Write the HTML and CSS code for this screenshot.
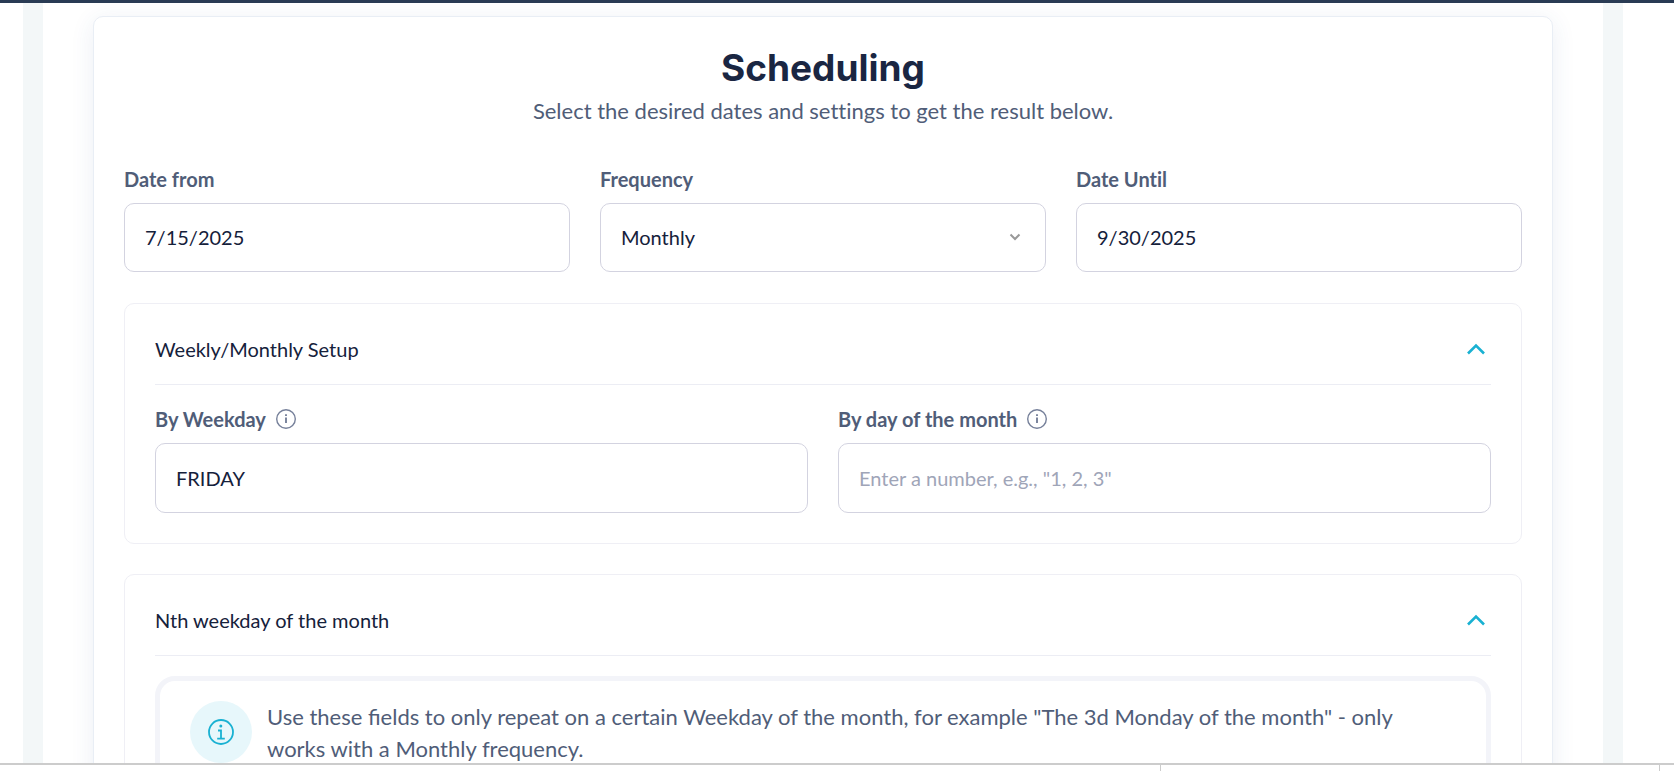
FILE: index.html
```html
<!DOCTYPE html>
<html lang="en">
<head>
<meta charset="utf-8">
<title>Scheduling</title>
<link rel="stylesheet" href="styles.css">
</head>
<body>
<header class="topbar"></header>
<main class="viewport">
  <div class="frame">
    <form class="card">
      <div class="intro">
        <h1 class="title">Scheduling</h1>
        <p class="subtitle">Select the desired dates and settings to get the result below.</p>
      </div>
      <div class="fields fields-three">
        <div class="field">
          <label class="label" for="from">Date from</label>
          <input class="control" id="from" type="text" value="7/15/2025">
        </div>
        <div class="field">
          <label class="label" for="frequency">Frequency</label>
          <div class="select-wrap">
            <select class="control" id="frequency"><option>Monthly</option></select>
            <svg class="select-arrow" viewBox="0 0 12 8" aria-hidden="true"><path d="M1.500 1.500 6 6l4.500-4.500"/></svg>
          </div>
        </div>
        <div class="field">
          <label class="label" for="until">Date Until</label>
          <input class="control" id="until" type="text" value="9/30/2025">
        </div>
      </div>
      <section class="panel">
        <button class="panel-head" type="button" aria-expanded="true">
          <span>Weekly/Monthly Setup</span>
          <svg class="panel-arrow" viewBox="0 0 20 12" aria-hidden="true"><path d="M2 10.500 10 2.500l8 8"/></svg>
        </button>
        <div class="fields fields-two">
          <div class="field">
            <div class="label-row">
              <label class="label" for="weekday">By Weekday</label>
              <svg class="hint" viewBox="0 0 20 20" aria-hidden="true"><circle cx="10" cy="10" r="9.300"/><path class="hint-mark" d="M10 8.500v5.500M10 5.200v1.900"/></svg>
            </div>
            <input class="control" id="weekday" type="text" value="FRIDAY">
          </div>
          <div class="field">
            <div class="label-row">
              <label class="label" for="monthday">By day of the month</label>
              <svg class="hint" viewBox="0 0 20 20" aria-hidden="true"><circle cx="10" cy="10" r="9.300"/><path class="hint-mark" d="M10 8.500v5.500M10 5.200v1.900"/></svg>
            </div>
            <input class="control" id="monthday" type="text" placeholder='Enter a number, e.g., "1, 2, 3"'>
          </div>
        </div>
      </section>
      <section class="panel">
        <button class="panel-head" type="button" aria-expanded="true">
          <span>Nth weekday of the month</span>
          <svg class="panel-arrow" viewBox="0 0 20 12" aria-hidden="true"><path d="M2 10.500 10 2.500l8 8"/></svg>
        </button>
        <div class="note">
          <span class="note-badge">
            <svg class="note-icon" viewBox="0 0 26 26" aria-hidden="true"><circle cx="13" cy="13" r="12"/><path d="M10 11.500h3v8M9.200 19.700h7.600"/><circle class="note-dot" cx="12.800" cy="7" r="1.500"/></svg>
          </span>
          <p class="note-text">Use these fields to only repeat on a certain Weekday of the month, for example "The 3d Monday of the month" - only works with a Monthly frequency.</p>
        </div>
      </section>
    </form>
  </div>
</main>
<footer class="statusbar"><span class="status-cell"></span><span class="status-end"></span></footer>
</body>
</html>
```
FILE: styles.css
```css
* { box-sizing: border-box; }

body {
  margin: 0;
  height: 100vh;
  display: flex;
  flex-direction: column;
  overflow: hidden;
  background: #fff;
  color: #15213b;
  font-family: Lato, "Liberation Sans", sans-serif;
  font-size: 20px;
}

.topbar { flex: none; height: 3px; background: #293b54; }

.viewport {
  flex: 1;
  min-height: 0;
  overflow: hidden;
  padding: 0 51px 0 23px;
}

.frame {
  border: solid #f3f7f8;
  border-width: 0 20px;
  padding: 13px 50px 30px;
}

.card {
  display: flex;
  flex-direction: column;
  gap: 30px;
  padding: 30px;
  border: 1px solid #e9eef5;
  border-radius: 10px;
  background: #fff;
  box-shadow: 0 4px 24px rgba(40, 80, 140, 0.09);
}

.intro { padding-bottom: 8px; text-align: center; }

.title {
  margin: 0;
  font: 700 37px/42px Inter, "Liberation Sans", sans-serif;
  color: #1a2642;
}

.subtitle {
  margin: 6px 0 0;
  font-size: 22px;
  line-height: 32px;
  color: #505d78;
  font-variant-ligatures: none;
}

.fields { display: grid; gap: 30px; }
.fields-three { grid-template-columns: repeat(3, 1fr); padding-bottom: 1px; }
.fields-two { grid-template-columns: repeat(2, 1fr); padding-top: 20px; }

.field { display: flex; flex-direction: column; gap: 10px; min-width: 0; }
.label-row { display: flex; align-items: center; gap: 10px; }
.label { font-weight: 700; line-height: 28px; color: #505d78; font-variant-ligatures: none; }

.hint { width: 20px; height: 20px; fill: none; stroke: #76809a; stroke-width: 1.4; }
.hint-mark { stroke-width: 1.9; }

.control {
  width: 100%;
  height: 70px;
  padding: 0 20px;
  border: 1px solid #d3d3e0;
  border-radius: 10px;
  background: #fff;
  color: inherit;
  font: inherit;
  appearance: none;
}

.fields-three .control { display: block; height: 69px; padding-bottom: 1px; }

.control::placeholder { color: #9fa5b8; opacity: 1; }

.select-wrap { position: relative; }
.select-arrow {
  position: absolute;
  top: 30px;
  right: 25px;
  width: 12px;
  height: 8px;
  fill: none;
  stroke: #999;
  stroke-width: 2;
  pointer-events: none;
}

.panel { padding: 30px; border: 1px solid #efeff5; border-radius: 10px; }

.panel-head {
  display: flex;
  align-items: center;
  justify-content: space-between;
  width: 100%;
  padding: 0 5px 20px 0;
  border: 0;
  border-bottom: 1px solid #ecedf4;
  background: none;
  color: inherit;
  font: inherit;
  line-height: 30px;
}

.panel-arrow { width: 20px; height: 12px; fill: none; stroke: #19b1d2; stroke-width: 2.6; }

.note {
  display: flex;
  gap: 15px;
  margin-top: 20px;
  padding: 20px 60px 20px 30px;
  border: 5px solid #f3f4f9;
  border-radius: 20px;
}

.note-badge {
  flex: none;
  display: flex;
  align-items: center;
  justify-content: center;
  width: 62px;
  height: 62px;
  border-radius: 50%;
  background: #e7f7fb;
}

.note-icon { width: 26px; height: 26px; fill: none; stroke: #19b1d2; stroke-width: 1.8; }
.note-dot { fill: #19b1d2; stroke: none; }
.note-text { margin: 0; font-size: 22px; line-height: 32px; color: #505d78; }

.statusbar {
  flex: none;
  display: flex;
  justify-content: flex-end;
  height: 8px;
  border-top: 2px solid #ccc;
  background: #fff;
}

.status-cell { width: 499px; border-left: 1px solid #ccc; }
.status-end { width: 15px; border-left: 1px solid #ccc; }
```
